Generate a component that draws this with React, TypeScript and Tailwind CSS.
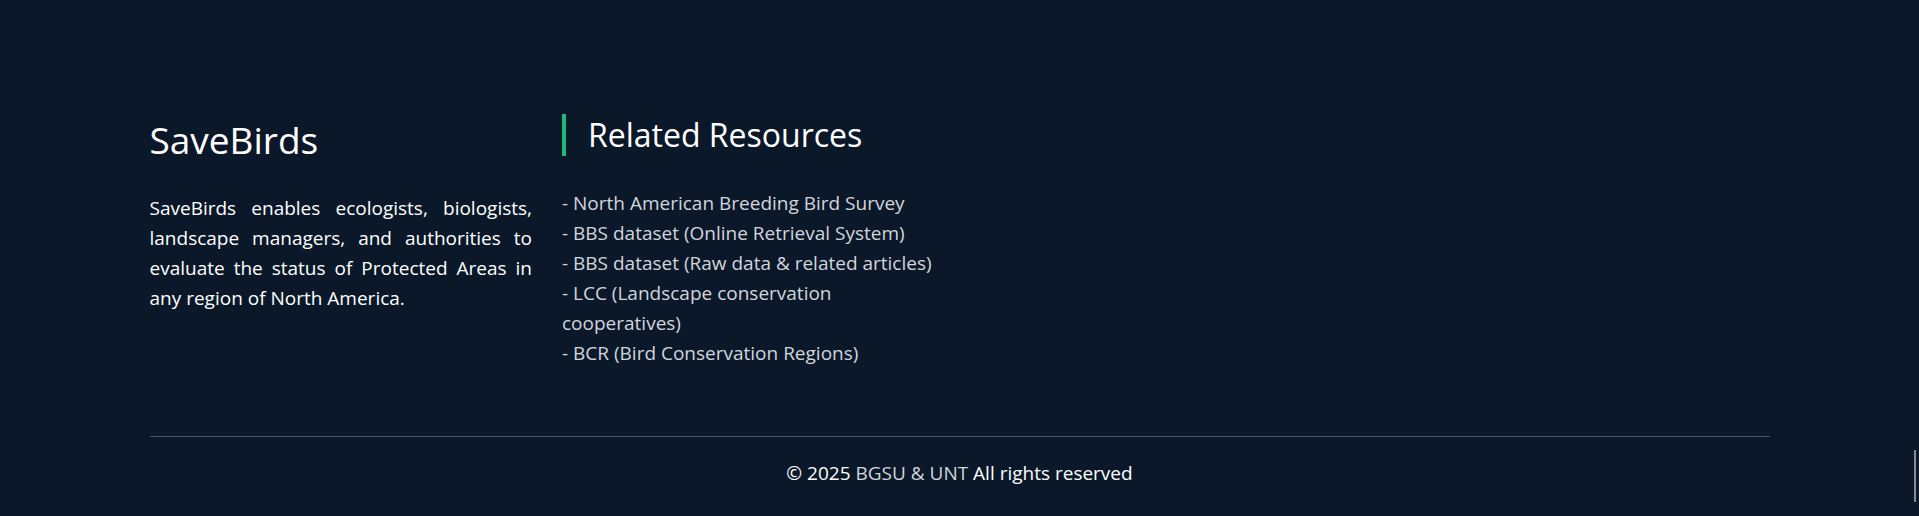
const RESOURCES = [
  "North American Breeding Bird Survey",
  "BBS dataset (Online Retrieval System)",
  "BBS dataset (Raw data & related articles)",
  "LCC (Landscape conservation cooperatives)",
  "BCR (Bird Conservation Regions)",
];

export default function App() {
  return (
    <footer className="relative min-h-[516px] bg-[#0a1829] pt-[114px] font-['Segoe_UI','Open_Sans',sans-serif]">
      <div className="mx-auto w-[1620px]">
        <div className="grid grid-cols-4 gap-[30px]">
          <div>
            <h3 className="text-[37px] leading-[52px] font-normal text-white">SaveBirds</h3>
            <p className="mt-[27px] text-justify text-[19px] leading-[30px] text-white">
              SaveBirds enables ecologists, biologists, landscape managers, and authorities to
              evaluate the status of Protected Areas in any region of North America.
            </p>
          </div>
          <div>
            <h3 className="border-l-4 border-[#20b77a] pl-[22px] text-[32px] leading-[42px] font-normal text-white">
              Related Resources
            </h3>
            <ul className="mt-[32px] text-[19px] leading-[30px] text-gray-300">
              {RESOURCES.map((r) => (
                <li key={r}>
                  <a href="#">- {r}</a>
                </li>
              ))}
            </ul>
          </div>
          <div />
          <div />
        </div>
        <hr className="mt-[68px] border-t border-[#4b5563]" />
        <p className="pt-[21px] text-center text-[19px] leading-[30px] text-white">
          © 2025 <span className="text-gray-300">BGSU &amp; UNT</span> All rights reserved
        </p>
      </div>
      <div className="absolute right-[3px] top-[450px] h-[52px] w-[2px] bg-[#8a8a8a]" />
    </footer>
  );
}
